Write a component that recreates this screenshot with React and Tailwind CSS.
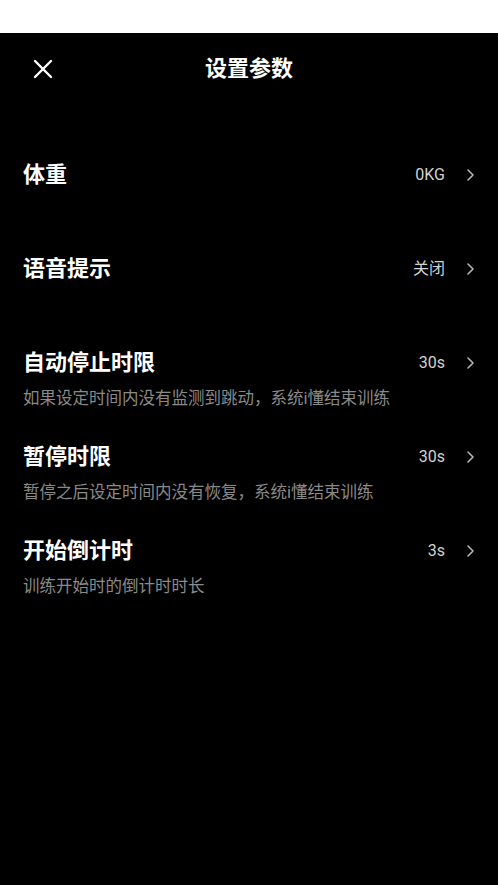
import React from "react";

const rows = [
  { title: "体重", value: "0KG" },
  { title: "语音提示", value: "关闭" },
  { title: "自动停止时限", value: "30s", desc: "如果设定时间内没有监测到跳动，系统i懂结束训练" },
  { title: "暂停时限", value: "30s", desc: "暂停之后设定时间内没有恢复，系统i懂结束训练" },
  { title: "开始倒计时", value: "3s", desc: "训练开始时的倒计时时长" },
];

const font = { fontFamily: 'Roboto, "Noto Sans CJK SC", sans-serif' };

function Chevron() {
  return (
    <svg width="10" height="12" viewBox="0 0 10 12" fill="none" className="shrink-0">
      <path d="M2 1 L7 6 L2 11" stroke="#b5b5b5" strokeWidth="1.6" strokeLinecap="round" strokeLinejoin="round" />
    </svg>
  );
}

export default function App() {
  return (
    <div className="w-[498px] h-[885px] bg-white flex flex-col" style={font}>
      <div className="h-[33px] bg-white" />
      <div className="flex-1 bg-black flex flex-col">
        <div className="h-[72px] flex items-center relative">
          <div className="pl-[33px] w-[60px]">
            <svg width="20" height="20" viewBox="0 0 20 20" fill="none">
              <path d="M2 2 L18 18 M18 2 L2 18" stroke="#ffffff" strokeWidth="2.4" strokeLinecap="round" />
            </svg>
          </div>
          <div className="flex-1 text-center text-white text-[22px] font-bold leading-[30px] pr-[60px]">
            设置参数
          </div>
        </div>
        <div className="pt-[23px] flex flex-col">
          {rows.map((r) => (
            <div key={r.title} className="h-[94px] pl-[23px] pr-[22px] flex flex-col">
              <div className="pt-[32px] flex items-center h-[62px]">
                <div className="flex-1 text-white text-[22px] font-bold leading-[30px]">{r.title}</div>
                <div className="text-[#d2d2d2] text-[16px] leading-[30px] mr-[21px]">{r.value}</div>
                <Chevron />
              </div>
              {r.desc && (
                <div className="mt-[10px] text-[#8a8a8a] text-[16.5px] leading-[22px]">{r.desc}</div>
              )}
            </div>
          ))}
        </div>
      </div>
    </div>
  );
}
